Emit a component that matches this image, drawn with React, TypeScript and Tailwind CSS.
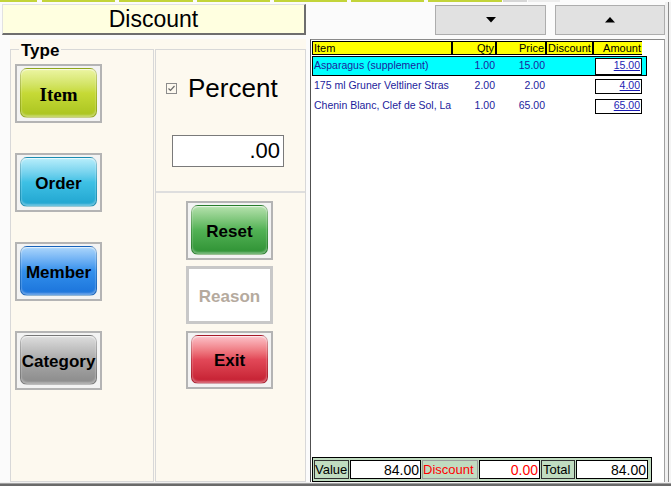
import React from "react";

type BtnProps = { label: string; grad: string; serif?: boolean; h?: string };

function GlossButton({ label, grad, serif, h }: BtnProps) {
  return (
    <div className={`w-[87px] ${h ?? "h-[59px]"} border-2 border-[#b4b4b4] bg-[#f3f3f3] px-[3px] pt-[2px] pb-[3px] flex shrink-0`}>
      <div
        className={`flex-1 rounded-[7px] border border-black/15 ${grad} shadow-[inset_0_1px_1px_rgba(255,255,255,0.7),inset_0_-2px_2px_rgba(255,255,255,0.35)] flex items-center justify-center pt-[3px]`}
      >
        <span
          className={
            serif
              ? "font-['Liberation_Serif',serif] font-bold text-[19px] leading-[22px] text-black"
              : "font-bold text-[17px] leading-[20px] text-black"
          }
        >
          {label}
        </span>
      </div>
    </div>
  );
}

const rows = [
  { item: "Asparagus (supplement)", qty: "1.00", price: "15.00", amount: "15.00", sel: true },
  { item: "175 ml Gruner Veltliner Stras", qty: "2.00", price: "2.00", amount: "4.00", sel: false },
  { item: "Chenin Blanc, Clef de Sol, La", qty: "1.00", price: "65.00", amount: "65.00", sel: false },
];

export default function App() {
  return (
    <div className="w-[671px] h-[486px] bg-[#fbfbfb] flex flex-col overflow-hidden font-['Liberation_Sans',Arial,sans-serif] text-black">
      {/* top tab strip */}
      <div className="h-[2px] flex shrink-0">
        <div className="w-[37px] bg-[#c3d43a]" />
        <div className="ml-[5px] w-[73px] bg-[#c3d43a]" />
        <div className="ml-[4px] w-[74px] bg-[#c3d43a]" />
        <div className="ml-[4px] w-[73px] bg-[#c3d43a]" />
        <div className="ml-[4px] w-[73px] bg-[#c3d43a]" />
        <div className="ml-[4px] w-[73px] bg-[#c3d43a]" />
        <div className="ml-[4px] w-[74px] bg-[#c3d43a]" />
        <div className="ml-[1px] w-[24px] bg-[#d6d6d6]" />
        <div className="ml-[1px] w-[32px] bg-[#ececec]" />
      </div>

      {/* main */}
      <div className="flex flex-1 min-h-0">
        {/* left part */}
        <div className="w-[306px] flex flex-col shrink-0">
          <div className="mt-[2px] ml-[2px] h-[31px] w-[304px] bg-[#ffffe0] border-t border-l border-[#e2e2e2] border-r-2 border-b-2 border-r-[#6e6e6e] border-b-[#6e6e6e] flex items-center justify-center text-[23px] leading-[26px]">
            Discount
          </div>
          <div className="ml-[10px] mt-[4px] flex-1 min-h-0 bg-[#fdf9ef] flex">
            {/* Type group */}
            <div className="relative w-[144px] mt-[10px] border border-[#d8d8d8] flex flex-col gap-[30px] pl-[4px] pt-[14px]">
              <span className="absolute -top-[9px] left-[8px] px-[2px] bg-[#fdf9ef] text-[17px] leading-[20px] font-bold">
                Type
              </span>
              <GlossButton label="Item" serif grad="bg-linear-to-b from-[#ecf5a2] via-[#c6da36] to-[#a9c31e]" />
              <GlossButton label="Order" grad="bg-linear-to-b from-[#b8eefb] via-[#3ec1e5] to-[#1ea4cf]" />
              <GlossButton label="Member" grad="bg-linear-to-b from-[#acd6fb] via-[#3290ec] to-[#1a72da]" />
              <GlossButton label="Category" grad="bg-linear-to-b from-[#dedede] via-[#a9a9a9] to-[#8a8a8a]" />
            </div>
            {/* right column */}
            <div className="w-[151px] ml-[1px] mt-[10px] border border-[#d8d8d8] flex flex-col">
              <div className="h-[143px] border-b-2 border-[#dedede] flex flex-col pt-[23px] shrink-0">
                <div className="flex items-center pl-[10px] h-[30px]">
                  <div className="w-[11px] h-[11px] border border-[#8c8c8c] flex items-center justify-center">
                    <svg width="9" height="9" viewBox="0 0 9 9">
                      <path d="M1.5 4.5 L3.5 6.5 L7.5 2" stroke="#6a6a6a" strokeWidth="1.2" fill="none" />
                    </svg>
                  </div>
                  <span className="ml-[11px] text-[26px] leading-[30px]">Percent</span>
                </div>
                <div className="ml-[16px] mt-[32px] w-[112px] h-[32px] border border-[#7a7a7a] bg-white flex items-center justify-end pr-[3px] text-[22px] leading-[26px]">
                  .00
                </div>
              </div>
              <div className="flex flex-col pl-[30px] pt-[8px]">
                <GlossButton label="Reset" grad="bg-linear-to-b from-[#b6e2ae] via-[#52b255] to-[#2d9133]" />
                <div className="mt-[6px] w-[87px] h-[58px] border-[3px] border-[#c8c8c8] bg-white flex items-center justify-center pt-[3px]">
                  <span className="font-bold text-[17px] leading-[20px] text-[#b5aa9e]">Reason</span>
                </div>
                <div className="mt-[7px]">
                  <GlossButton label="Exit" h="h-[58px]" grad="bg-linear-to-b from-[#fbc2ca] via-[#e24858] to-[#c31b2f]" />
                </div>
              </div>
            </div>
          </div>
        </div>

        {/* right part */}
        <div className="w-[359px] flex flex-col shrink-0">
          <div className="h-[37px] flex pt-[3px] pl-[129px] gap-[9px] shrink-0">
            <div className="w-[111px] h-[30px] bg-[#e1e1e1] border border-[#adadad] flex items-center justify-center">
              <svg width="10" height="6" viewBox="0 0 10 6">
                <polygon points="0,0 10,0 5,5.5" fill="#000" />
              </svg>
            </div>
            <div className="w-[110px] h-[30px] bg-[#e1e1e1] border border-[#adadad] flex items-center justify-center">
              <svg width="10" height="6" viewBox="0 0 10 6">
                <polygon points="0,5.5 10,5.5 5,0" fill="#000" />
              </svg>
            </div>
          </div>
          <div className="ml-[4px] flex-1 min-h-0 bg-white border-l border-t border-r border-l-[#505050] border-t-[#8a8a8a] border-r-[#a0a0a0] flex flex-col pl-[1px] pt-[1px]">
            {/* header */}
            <div className="flex h-[14px] text-[11px] leading-[12px] shrink-0">
              <div className="w-[140px] bg-[#ffff00] border border-black pl-[1px]">Item</div>
              <div className="w-[44px] bg-[#ffff00] border border-black text-right pr-[1px]">Qty</div>
              <div className="w-[50px] bg-[#ffff00] border border-black text-right pr-[1px]">Price</div>
              <div className="w-[47px] bg-[#ffff00] border border-black text-center">Discount</div>
              <div className="w-[49px] bg-[#ffff00] border-y border-l border-black text-right pr-[1px]">Amount</div>
            </div>
            {/* rows */}
            <div className="mt-[1px] flex flex-col text-[10.5px] text-[#1c1c9c] shrink-0">
              {rows.map((r) => (
                <div
                  key={r.item}
                  className={
                    r.sel
                      ? "h-[20px] w-[335px] border border-black bg-[#00ffff] flex items-center"
                      : "h-[20px] w-[335px] border border-transparent flex items-center"
                  }
                >
                  <div className="w-[139px] pl-[1px] whitespace-nowrap overflow-hidden">{r.item}</div>
                  <div className="w-[44px] text-right pr-[1px]">{r.qty}</div>
                  <div className="w-[50px] text-right pr-[1px]">{r.price}</div>
                  <div className="w-[47px]" />
                  <div
                    className={
                      r.sel
                        ? "ml-[2px] w-[47px] h-[17px] border border-black bg-white flex items-center justify-end pr-[1px] underline text-[#1c1cb4]"
                        : "ml-[2px] w-[47px] h-[15px] border border-black bg-white flex items-center justify-end pr-[1px] underline text-[#1c1cb4]"
                    }
                  >
                    {r.amount}
                  </div>
                </div>
              ))}
            </div>
            {/* totals bar */}
            <div className="mt-auto h-[25px] w-[340px] border border-black bg-[#c0dcc0] flex items-center pl-[1px] gap-[1px] shrink-0">
              <div className="w-[35px] h-[19px] border border-[#303030] flex items-center text-[13px] leading-[15px]">Value</div>
              <div className="w-[71px] h-[19px] border border-black bg-white flex items-center justify-end pr-[1px] text-[14px] leading-[16px]">84.00</div>
              <div className="w-[56px] h-[19px] border border-[#9a9a9a] flex items-center text-[13px] leading-[15px] text-[#ff0000]">Discount</div>
              <div className="w-[61px] h-[19px] border border-black bg-white flex items-center justify-end pr-[1px] text-[14px] leading-[16px] text-[#ff0000]">0.00</div>
              <div className="w-[34px] h-[19px] border border-[#303030] flex items-center pl-[1px] text-[13px] leading-[15px]">Total</div>
              <div className="w-[72px] h-[19px] border border-black bg-white flex items-center justify-end pr-[1px] text-[14px] leading-[16px]">84.00</div>
            </div>
          </div>
        </div>

        {/* right frame */}
        <div className="w-[6px] flex shrink-0">
          <div className="w-[3px] bg-[#f0f0f0]" />
          <div className="w-[1px] bg-[#8a8a8a]" />
          <div className="w-[2px] bg-[#f4f4f4]" />
        </div>
      </div>

      {/* bottom frame */}
      <div className="h-[4px] shrink-0 flex flex-col">
        <div className="h-[1px] bg-[#f0f0f0]" />
        <div className="h-[1px] bg-[#a0a0a0]" />
        <div className="h-[2px] bg-[#6a6a6a]" />
      </div>
    </div>
  );
}
